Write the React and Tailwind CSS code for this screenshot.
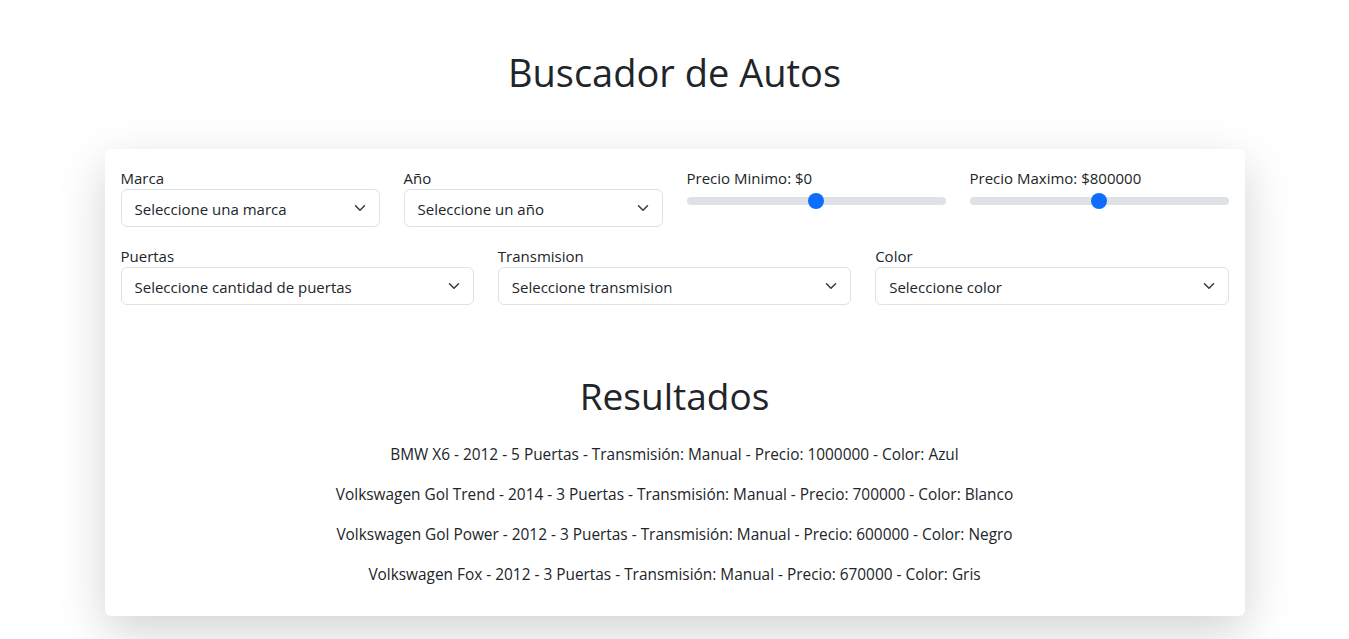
const autos = [
  "BMW X6 - 2012 - 5 Puertas - Transmisión: Manual - Precio: 1000000 - Color: Azul",
  "Volkswagen Gol Trend - 2014 - 3 Puertas - Transmisión: Manual - Precio: 700000 - Color: Blanco",
  "Volkswagen Gol Power - 2012 - 3 Puertas - Transmisión: Manual - Precio: 600000 - Color: Negro",
  "Volkswagen Fox - 2012 - 3 Puertas - Transmisión: Manual - Precio: 670000 - Color: Gris",
];

function Chevron() {
  return (
    <svg className="pointer-events-none absolute right-3 top-1/2 -translate-y-1/2" width="16" height="12" viewBox="0 0 16 16">
      <path d="m2 5 6 6 6-6" fill="none" stroke="#343a40" strokeWidth="2" strokeLinecap="round" strokeLinejoin="round" />
    </svg>
  );
}

function Campo({ label, placeholder }) {
  return (
    <div>
      <label className="block h-[23px] leading-6">{label}</label>
      <div className="relative">
        <select className="block h-[38px] w-full appearance-none rounded-md border border-[#dee2e6] bg-white pt-[2px] pl-[13px] pr-9 text-[#212529] outline-none">
          <option>{placeholder}</option>
        </select>
        <Chevron />
      </div>
    </div>
  );
}

function Rango({ label }) {
  return (
    <div>
      <label className="block h-[23px] leading-6">{label}</label>
      <div className="flex h-6 items-center">
        <div className="relative h-2 w-full rounded-full bg-[#dee2e6]">
          <div className="absolute left-1/2 top-1/2 h-4 w-4 -translate-x-1/2 -translate-y-1/2 rounded-full bg-[#0d6efd]" />
        </div>
      </div>
    </div>
  );
}

export default function App() {
  return (
    <div className="min-h-screen bg-white text-[15px] text-[#212529]" style={{ fontFamily: '"Open Sans", "Noto Sans", sans-serif' }}>
      <div className="mx-auto w-[1140px] pt-12">
        <h1 className="h-12 text-center text-[38px] leading-[48px]">Buscador de Autos</h1>

        <div className="mt-[53px] rounded-md bg-white px-4 pb-[29px] pt-[17px] shadow-[0_16px_48px_rgba(0,0,0,0.175)]">
          <div className="grid grid-cols-4 gap-6">
            <Campo label="Marca" placeholder="Seleccione una marca" />
            <Campo label="Año" placeholder="Seleccione un año" />
            <Rango label="Precio Minimo: $0" />
            <Rango label="Precio Maximo: $800000" />
          </div>

          <div className="mt-[17px] grid grid-cols-3 gap-6">
            <Campo label="Puertas" placeholder="Seleccione cantidad de puertas" />
            <Campo label="Transmision" placeholder="Seleccione transmision" />
            <Campo label="Color" placeholder="Seleccione color" />
          </div>

          <h2 className="mt-[67px] h-12 text-center text-[37px] leading-[48px]">Resultados</h2>

          <div className="mt-[23px] flex flex-col gap-4">
            {autos.map((a) => (
              <p key={a} className="text-center text-[15.4px] leading-6">{a}</p>
            ))}
          </div>
        </div>
      </div>
    </div>
  );
}
